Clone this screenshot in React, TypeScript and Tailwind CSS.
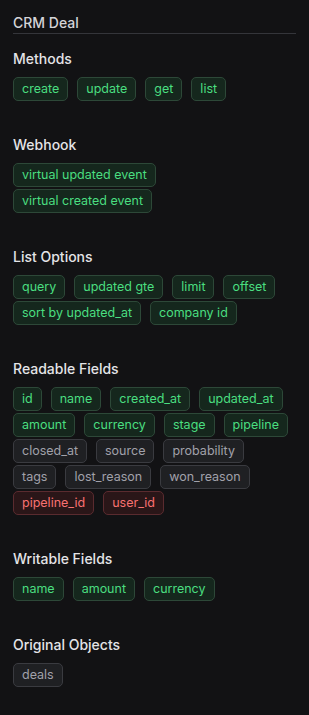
type Tone = "green" | "gray" | "red";

const toneClass: Record<Tone, string> = {
  green: "bg-[#15271d] border-[#2d4838] text-[#4ade80]",
  gray: "bg-[#1f2023] border-[#3a3b40] text-[#a1a1aa]",
  red: "bg-[#2a1618] border-[#5a2b2f] text-[#f87171]",
};

const Chip = ({ label, tone = "green" }: { label: string; tone?: Tone }) => (
  <span
    className={`inline-flex items-center h-[24px] px-2 rounded-[5px] border text-[12.5px] leading-none ${toneClass[tone]}`}
  >
    {label}
  </span>
);

const Section = ({
  title,
  children,
}: {
  title: string;
  children: React.ReactNode;
}) => (
  <div className="pb-[34px]">
    <h3 className="text-[14px] leading-[20px] font-medium text-[#e4e4e7] mb-[8px]">
      {title}
    </h3>
    <div className="flex flex-wrap gap-x-[9px] gap-y-[2px]">{children}</div>
  </div>
);

export default function App() {
  const readable: [string, Tone][] = [
    ["id", "green"],
    ["name", "green"],
    ["created_at", "green"],
    ["updated_at", "green"],
    ["amount", "green"],
    ["currency", "green"],
    ["stage", "green"],
    ["pipeline", "green"],
    ["closed_at", "gray"],
    ["source", "gray"],
    ["probability", "gray"],
    ["tags", "gray"],
    ["lost_reason", "gray"],
    ["won_reason", "gray"],
    ["pipeline_id", "red"],
    ["user_id", "red"],
  ];

  return (
    <div
      className="min-h-[715px] w-[309px] bg-[#121214] px-[13px] pt-[13px]"
      style={{ fontFamily: "Inter, 'Noto Sans', sans-serif" }}
    >
      {/* Header */}
      <div className="border-b border-[#34353a] mb-[15px]">
        <h2 className="text-[14px] leading-[20px] font-medium text-[#d4d4d8]">
          CRM Deal
        </h2>
      </div>

      <Section title="Methods">
        {["create", "update", "get", "list"].map((m) => (
          <Chip key={m} label={m} />
        ))}
      </Section>

      <Section title="Webhook">
        <Chip label="virtual updated event" />
        <Chip label="virtual created event" />
      </Section>

      <Section title="List Options">
        {["query", "updated gte", "limit", "offset", "sort by updated_at", "company id"].map(
          (o) => (
            <Chip key={o} label={o} />
          )
        )}
      </Section>

      <Section title="Readable Fields">
        {readable.map(([f, t]) => (
          <Chip key={f} label={f} tone={t} />
        ))}
      </Section>

      <Section title="Writable Fields">
        {["name", "amount", "currency"].map((f) => (
          <Chip key={f} label={f} />
        ))}
      </Section>

      <Section title="Original Objects">
        <Chip label="deals" tone="gray" />
      </Section>
    </div>
  );
}
